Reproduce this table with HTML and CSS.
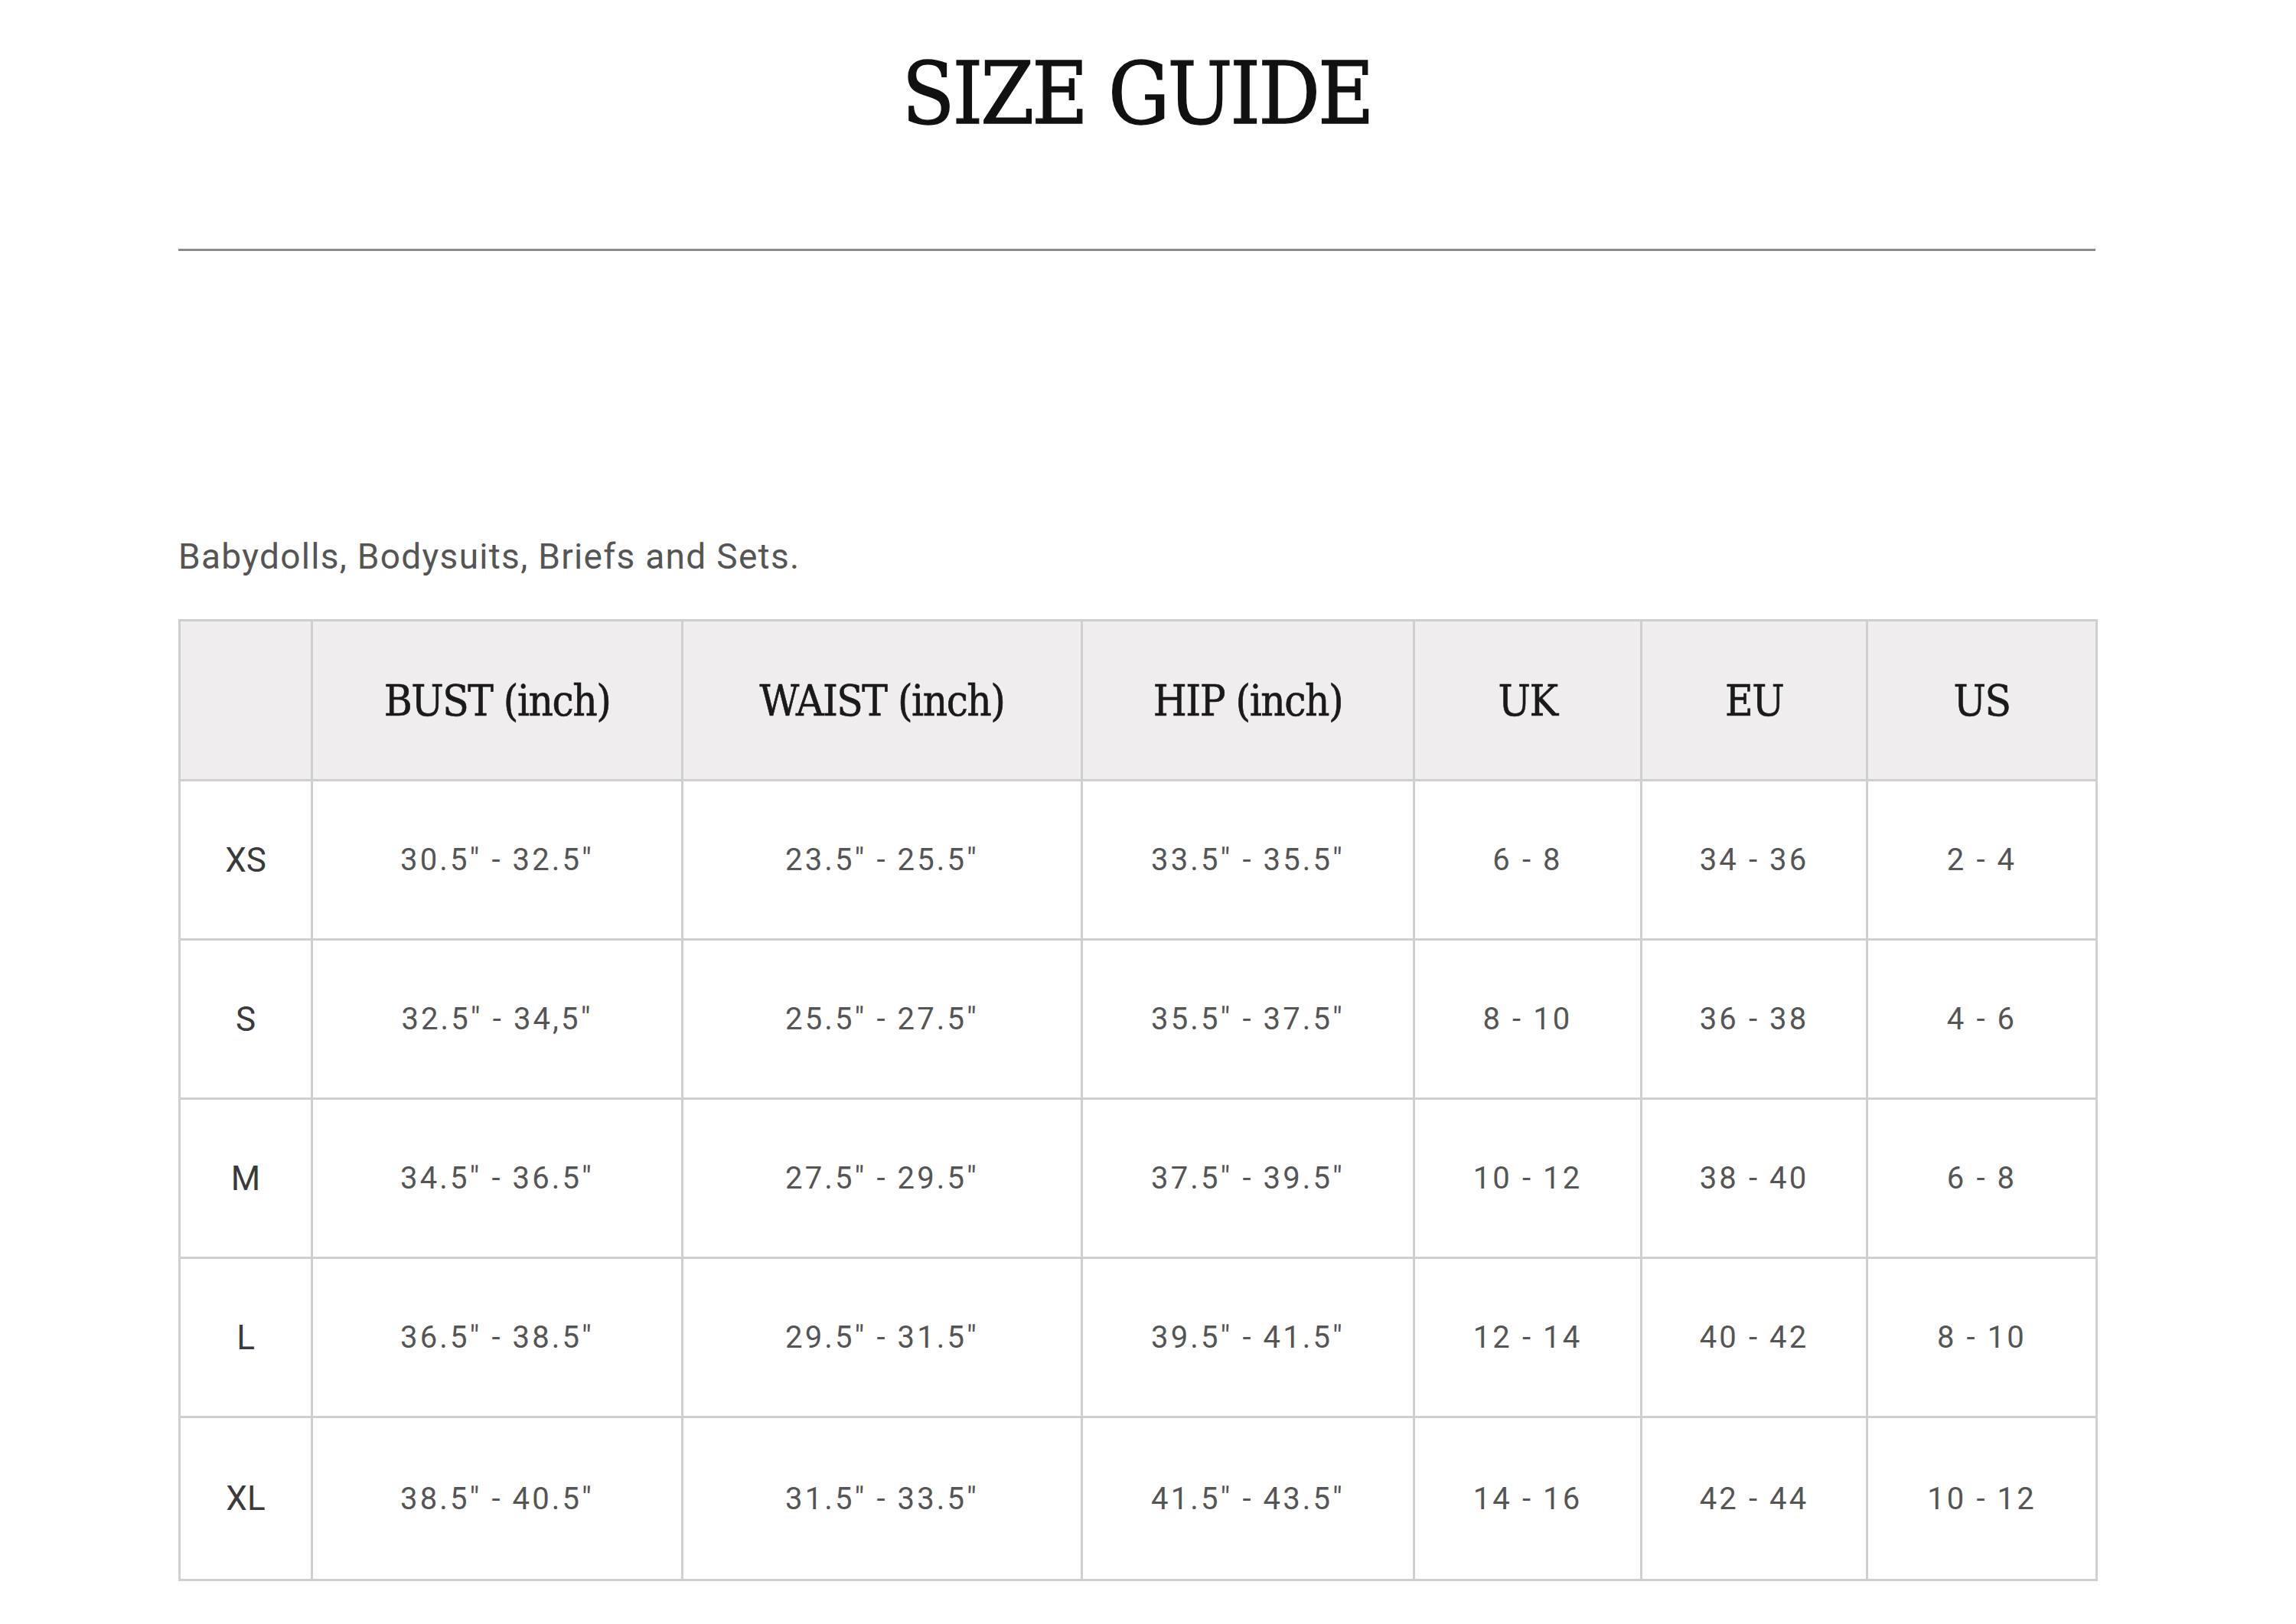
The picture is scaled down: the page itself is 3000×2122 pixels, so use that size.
FILE: index.html
```html
<!DOCTYPE html>
<html lang="en">
<head>
<meta charset="utf-8">
<title>Size Guide</title>
<link rel="stylesheet" href="styles.css">
</head>
<body>
<main class="page">
  <h1 class="title">SIZE GUIDE</h1>
  <div class="rule"></div>
  <p class="caption">Babydolls, Bodysuits, Briefs and Sets.</p>
  <table class="size-table">
    <colgroup>
      <col class="c-size">
      <col class="c-bust">
      <col class="c-waist">
      <col class="c-hip">
      <col class="c-uk">
      <col class="c-eu">
      <col class="c-us">
    </colgroup>
    <thead>
      <tr>
        <th></th>
        <th>BUST (inch)</th>
        <th>WAIST (inch)</th>
        <th>HIP (inch)</th>
        <th>UK</th>
        <th>EU</th>
        <th>US</th>
      </tr>
    </thead>
    <tbody>
      <tr>
        <td class="size">XS</td>
        <td>30.5" - 32.5"</td>
        <td>23.5" - 25.5"</td>
        <td>33.5" - 35.5"</td>
        <td>6 - 8</td>
        <td>34 - 36</td>
        <td>2 - 4</td>
      </tr>
      <tr>
        <td class="size">S</td>
        <td>32.5" - 34,5"</td>
        <td>25.5" - 27.5"</td>
        <td>35.5" - 37.5"</td>
        <td>8 - 10</td>
        <td>36 - 38</td>
        <td>4 - 6</td>
      </tr>
      <tr>
        <td class="size">M</td>
        <td>34.5" - 36.5"</td>
        <td>27.5" - 29.5"</td>
        <td>37.5" - 39.5"</td>
        <td>10 - 12</td>
        <td>38 - 40</td>
        <td>6 - 8</td>
      </tr>
      <tr>
        <td class="size">L</td>
        <td>36.5" - 38.5"</td>
        <td>29.5" - 31.5"</td>
        <td>39.5" - 41.5"</td>
        <td>12 - 14</td>
        <td>40 - 42</td>
        <td>8 - 10</td>
      </tr>
      <tr class="last">
        <td class="size">XL</td>
        <td>38.5" - 40.5"</td>
        <td>31.5" - 33.5"</td>
        <td>41.5" - 43.5"</td>
        <td>14 - 16</td>
        <td>42 - 44</td>
        <td>10 - 12</td>
      </tr>
    </tbody>
  </table>
</main>
</body>
</html>
```

FILE: styles.css
```css
html, body {
  margin: 0;
  padding: 0;
  background: #ffffff;
}

.page {
  width: 2505px;
  margin-left: 233px;
  padding-top: 66px;
  padding-bottom: 56px;
}

.title {
  margin: 0;
  text-align: center;
  font-family: "DejaVu Serif", "Liberation Serif", serif;
  font-stretch: condensed;
  font-weight: 400;
  font-size: 112px;
  line-height: 1;
  letter-spacing: -3px;
  -webkit-text-stroke: 1.3px #111111;
  color: #111111;
}

.rule {
  margin-top: 147px;
  border-top: 3px solid #8c8c8c;
}

.caption {
  margin: 376px 0 0 0;
  font-family: Roboto, "Liberation Sans", sans-serif;
  font-size: 46px;
  line-height: 1;
  letter-spacing: 1.3px;
  color: #555555;
}

.size-table {
  margin-top: 59px;
  width: 2505px;
  table-layout: fixed;
  border-collapse: collapse;
  border: 3px solid #cfcfcf;
}

.c-size { width: 173px; }
.c-bust { width: 484px; }
.c-waist { width: 522px; }
.c-hip { width: 434px; }
.c-uk { width: 297px; }
.c-eu { width: 295px; }
.c-us { width: 300px; }

.size-table th,
.size-table td {
  border: 3px solid #cfcfcf;
  padding: 0;
  text-align: center;
  vertical-align: middle;
}

.size-table th {
  height: 206px;
  background: #efeded;
  font-family: "DejaVu Serif", "Liberation Serif", serif;
  font-stretch: condensed;
  font-weight: 400;
  font-size: 56px;
  letter-spacing: -1.5px;
  -webkit-text-stroke: 0.6px #1a1a1a;
  color: #1a1a1a;
}

.size-table td {
  height: 205px;
  font-family: Roboto, "Liberation Sans", sans-serif;
  font-size: 40px;
  letter-spacing: 3.1px;
  color: #555555;
}

.size-table .last td {
  height: 210px;
}

.size-table td.size {
  font-size: 44px;
  letter-spacing: 0;
  color: #3a3a3a;
}
```
